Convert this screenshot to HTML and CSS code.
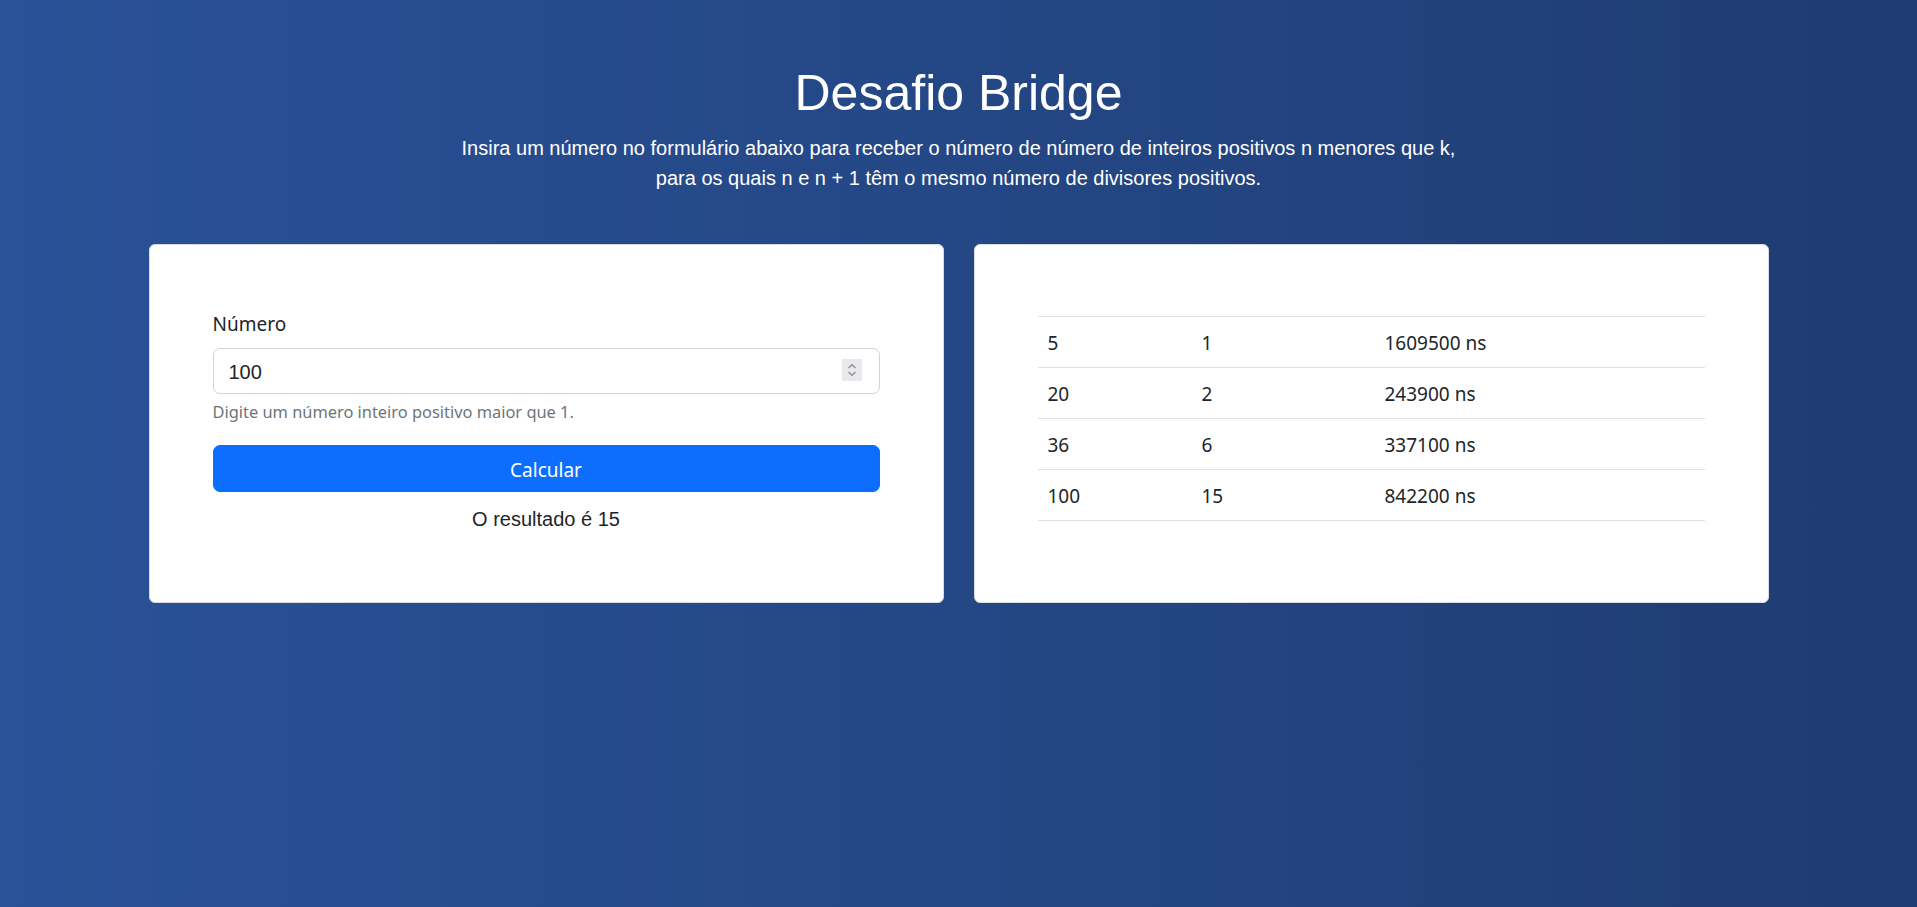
FILE: index.html
```html
<!DOCTYPE html>
<html lang="pt-BR">
<head>
<meta charset="utf-8">
<title>Desafio Bridge</title>
<link rel="stylesheet" href="styles.css">
</head>
<body>
<header class="hero">
  <h1 class="hero-title">Desafio Bridge</h1>
  <p class="hero-lead">Insira um número no formulário abaixo para receber o número de número de inteiros positivos n menores que k,<br>para os quais n e n + 1 têm o mesmo número de divisores positivos.</p>
</header>
<main class="cards">
  <section class="card">
    <form class="calc-form">
      <label class="form-label" for="numero">Número</label>
      <div class="input-wrap">
        <input class="form-control" id="numero" type="text" value="100">
        <span class="spinner" aria-hidden="true">
          <svg width="20" height="22" viewBox="0 0 20 22">
            <path d="M6.5 9 L10 5.8 L13.5 9" fill="none" stroke="#8e8e93" stroke-width="1.4"/>
            <path d="M6.5 13 L10 16.2 L13.5 13" fill="none" stroke="#8e8e93" stroke-width="1.4"/>
          </svg>
        </span>
      </div>
      <div class="form-text">Digite um número inteiro positivo maior que 1.</div>
      <button class="btn-primary" type="button">Calcular</button>
      <p class="result">O resultado é 15</p>
    </form>
  </section>
  <section class="card">
    <table class="results">
      <colgroup><col class="c1"><col class="c2"><col class="c3"></colgroup>
      <tbody>
        <tr><td>5</td><td>1</td><td>1609500 ns</td></tr>
        <tr><td>20</td><td>2</td><td>243900 ns</td></tr>
        <tr><td>36</td><td>6</td><td>337100 ns</td></tr>
        <tr><td>100</td><td>15</td><td>842200 ns</td></tr>
      </tbody>
    </table>
  </section>
</main>
</body>
</html>
```
FILE: styles.css
```css
html, body {
  margin: 0;
  padding: 0;
}
body {
  min-height: 907px;
  background: linear-gradient(to right, #2a5298, #1e3c72);
  font-family: "Noto Sans", "Open Sans", sans-serif;
  color: #212529;
}
.hero {
  padding-top: 63px;
  text-align: center;
  color: #fff;
  font-family: "Liberation Sans", Arial, sans-serif;
}
.hero-title {
  margin: 0;
  font-size: 50px;
  line-height: 60px;
  font-weight: 400;
}
.hero-lead {
  margin: 10px 0 0;
  font-size: 20px;
  line-height: 30px;
}
.cards {
  width: 1620px;
  margin: 51px auto 0;
  display: grid;
  grid-template-columns: 1fr 1fr;
  gap: 30px;
  align-items: stretch;
}
.card {
  background: #fff;
  border: 1px solid #d9dce0;
  border-radius: 6px;
  padding: 63px 63px 68px;
}
.calc-form {
  display: flex;
  flex-direction: column;
}
.form-label {
  font-size: 19px;
  line-height: 30px;
  padding-top: 1px;
  margin-bottom: 9px;
}
.input-wrap {
  position: relative;
}
.form-control {
  display: block;
  width: 100%;
  box-sizing: border-box;
  height: 46px;
  padding: 8px 15px 6px;
  border: 1px solid #ced4da;
  border-radius: 7px;
  font-family: "Liberation Sans", Arial, sans-serif;
  font-size: 20px;
  line-height: 30px;
  color: #212529;
  background: #fff;
  outline: none;
}
.spinner {
  position: absolute;
  right: 18px;
  top: 11px;
  width: 20px;
  height: 22px;
  background: #e9e9ed;
  display: flex;
}
.form-text {
  margin-top: 5px;
  font-size: 16.4px;
  line-height: 26px;
  color: #6c757d;
}
.btn-primary {
  margin-top: 20px;
  height: 47px;
  border: 1px solid #0d6efd;
  border-radius: 7px;
  background: #0d6efd;
  color: #fff;
  font-family: "Noto Sans", "Open Sans", sans-serif;
  font-size: 19px;
  line-height: 30px;
  padding: 2px 0 0;
}
.result {
  margin: 12px 0 0;
  text-align: center;
  font-family: "Liberation Sans", Arial, sans-serif;
  font-size: 20px;
  line-height: 30px;
  color: #212529;
}
.results {
  width: 100%;
  margin-top: 8px;
  border-collapse: collapse;
  border-top: 1px solid #dee2e6;
  font-size: 19px;
  line-height: 30px;
}
.results .c1 { width: 154px; }
.results .c2 { width: 183px; }
.results td {
  padding: 11px 10px 9px;
  border-bottom: 1px solid #dee2e6;
  text-align: left;
}
```
